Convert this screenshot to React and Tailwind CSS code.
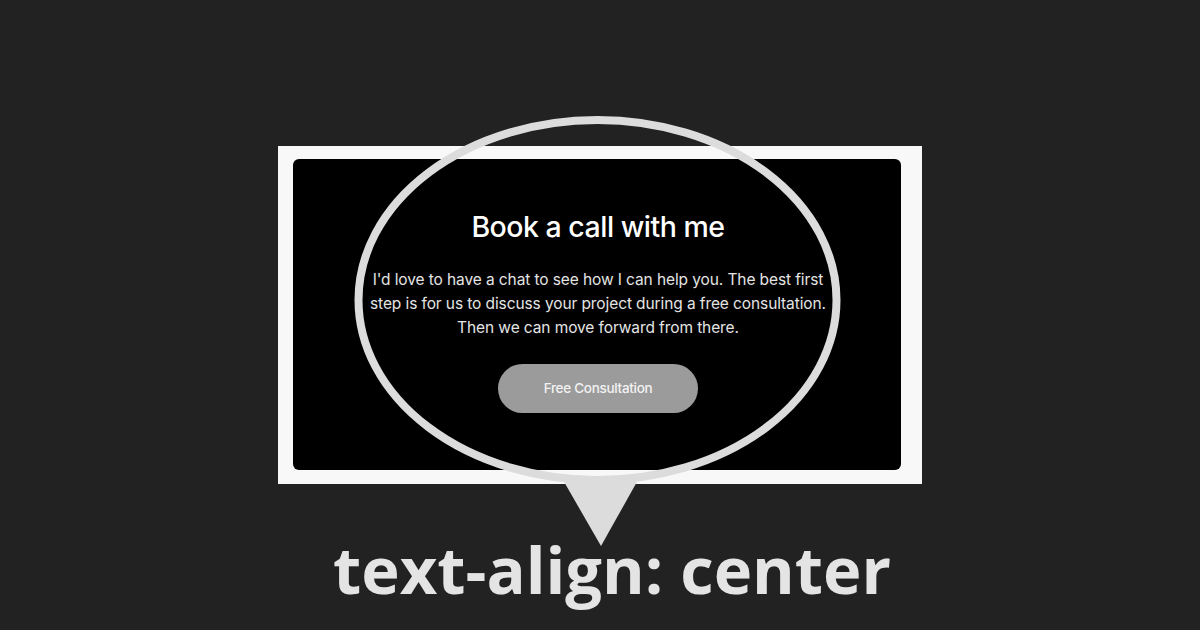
export default function App() {
  return (
    <div className="relative w-[1200px] h-[630px] bg-[#222222] overflow-hidden flex flex-col items-center pt-[146px]">
      <div className="w-[644px] h-[338px] bg-[#f8f8f8] pl-[15px] pr-[21px] pt-[13px] pb-[14px] flex">
        <div className="flex-1 bg-black rounded-[6px] flex flex-col items-center pt-[49px] pl-[2px]" style={{ fontFamily: "Inter, 'Noto Sans', sans-serif" }}>
          <h1 className="text-[28.5px] leading-[38px] font-medium text-white tracking-[-0.5px]">Book a call with me</h1>
          <p className="mt-[22px] text-[15.5px] leading-[24px] text-[#e4e4e4] text-center tracking-[-0.1px] w-[520px]">
            I'd love to have a chat to see how I can help you. The best first<br />
            step is for us to discuss your project during a free consultation.<br />
            Then we can move forward from there.
          </p>
          <div className="mt-[24px] w-[200px] h-[49px] rounded-full bg-[#9b9b9b] flex items-center justify-center text-[13.5px] font-medium text-[#f2f2f2] tracking-[-0.3px]">
            Free Consultation
          </div>
        </div>
      </div>
      <div className="mt-[48px] ml-[24px] text-[#e4e4e4] font-bold text-[65px] leading-[74px] tracking-[0px]" style={{ fontFamily: "'Open Sans', 'Noto Sans', sans-serif" }}>
        text-align: center
      </div>
      <svg className="absolute left-0 top-0 pointer-events-none" width="1200" height="630" viewBox="0 0 1200 630">
        <polygon points="563,480 638,480 601,546" fill="#dcdcdc" />
        <ellipse cx="597.5" cy="300" rx="239" ry="180" fill="none" stroke="#dcdcdc" strokeWidth="8" />
      </svg>
    </div>
  );
}
